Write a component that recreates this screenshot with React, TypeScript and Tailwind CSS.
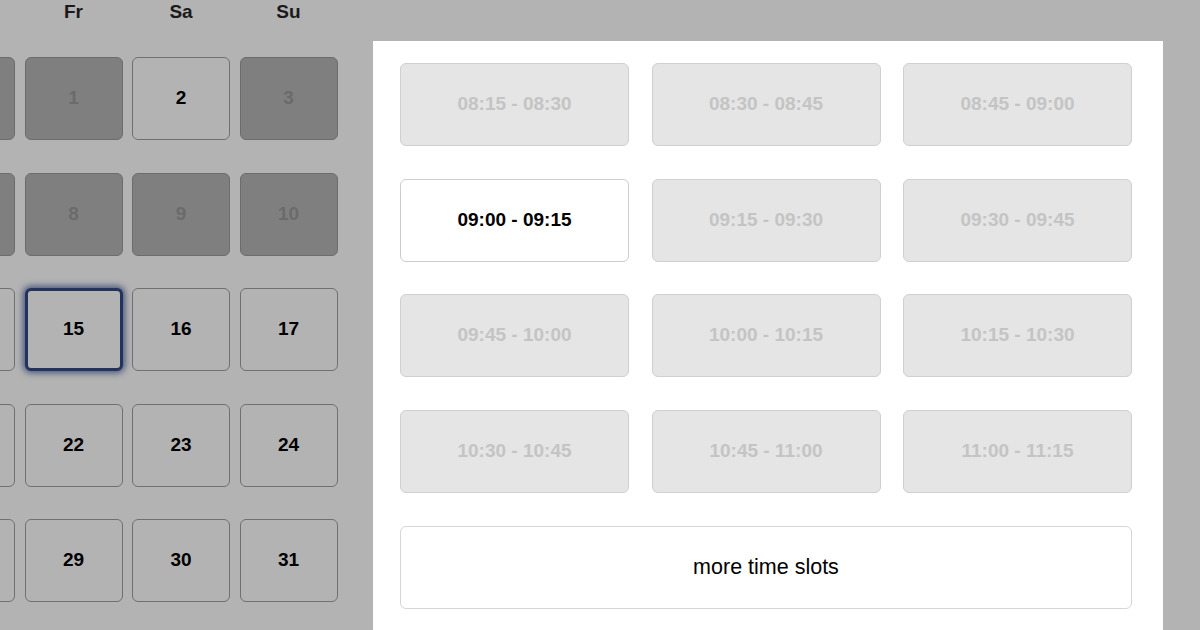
import React from "react";

type Cell = { n: number | null; kind: "dark" | "light" | "selected" };

const rows: Cell[][] = [
  [
    { n: null, kind: "dark" },
    { n: 1, kind: "dark" },
    { n: 2, kind: "light" },
    { n: 3, kind: "dark" },
  ],
  [
    { n: null, kind: "dark" },
    { n: 8, kind: "dark" },
    { n: 9, kind: "dark" },
    { n: 10, kind: "dark" },
  ],
  [
    { n: null, kind: "light" },
    { n: 15, kind: "selected" },
    { n: 16, kind: "light" },
    { n: 17, kind: "light" },
  ],
  [
    { n: null, kind: "light" },
    { n: 22, kind: "light" },
    { n: 23, kind: "light" },
    { n: 24, kind: "light" },
  ],
  [
    { n: null, kind: "light" },
    { n: 29, kind: "light" },
    { n: 30, kind: "light" },
    { n: 31, kind: "light" },
  ],
];

const slots: { t: string; on?: boolean }[] = [
  { t: "08:15 - 08:30" },
  { t: "08:30 - 08:45" },
  { t: "08:45 - 09:00" },
  { t: "09:00 - 09:15", on: true },
  { t: "09:15 - 09:30" },
  { t: "09:30 - 09:45" },
  { t: "09:45 - 10:00" },
  { t: "10:00 - 10:15" },
  { t: "10:15 - 10:30" },
  { t: "10:30 - 10:45" },
  { t: "10:45 - 11:00" },
  { t: "11:00 - 11:15" },
];

function DayCell({ c }: { c: Cell }) {
  const base =
    "w-[98px] h-[83px] rounded-[6px] flex items-center justify-center text-[19px] font-bold";
  if (c.kind === "dark")
    return (
      <div className={`${base} bg-[#7f7f7f] border border-[#6c6c6c] text-[#6b6b6b]`}>
        {c.n}
      </div>
    );
  if (c.kind === "selected")
    return (
      <div
        className={`${base} bg-[#b3b3b3] border-[3px] border-[#24325e] text-black shadow-[0_0_6px_2px_rgba(30,45,100,0.7)]`}
      >
        {c.n}
      </div>
    );
  return (
    <div className={`${base} bg-[#b3b3b3] border border-[#707070] text-black`}>
      {c.n}
    </div>
  );
}

export default function App() {
  return (
    <div
      className="w-[1200px] h-[630px] bg-[#b3b3b3] overflow-hidden flex"
      style={{ fontFamily: '"Liberation Sans", Arial, sans-serif' }}
    >
      <div className="ml-[-83px] flex flex-col shrink-0">
        <div className="flex gap-[9.5px] h-[24px] items-center">
          {["", "Fr", "Sa", "Su"].map((d, i) => (
            <div
              key={i}
              className="w-[98px] text-center text-[19px] font-bold text-[#1a1a1a] leading-[24px]"
            >
              {d}
            </div>
          ))}
        </div>
        <div className="mt-[33px] flex flex-col gap-[32.5px]">
          {rows.map((r, i) => (
            <div key={i} className="flex gap-[9.5px]">
              {r.map((c, j) => (
                <DayCell key={j} c={c} />
              ))}
            </div>
          ))}
        </div>
      </div>
      <div className="ml-[35.5px] mt-[41px] w-[790px] shrink-0 bg-white pt-[22px] px-[27px] flex flex-col">
        <div className="grid grid-cols-[229px_229px_229px] gap-x-[22.5px] gap-y-[32.5px]">
          {slots.map((s) =>
            s.on ? (
              <div
                key={s.t}
                className="h-[83px] rounded-[6px] bg-white border border-[#cdcdcd] flex items-center justify-center text-[19px] font-bold text-black"
              >
                {s.t}
              </div>
            ) : (
              <div
                key={s.t}
                className="h-[83px] rounded-[6px] bg-[#e5e5e5] border border-[#d0d0d0] flex items-center justify-center text-[19px] font-bold text-[#c4c4c4]"
              >
                {s.t}
              </div>
            )
          )}
        </div>
        <div className="mt-[33px] h-[83px] w-[732px] rounded-[6px] bg-white border border-[#d6d6d6] flex items-center justify-center text-[21.5px] text-black">
          more time slots
        </div>
      </div>
    </div>
  );
}
